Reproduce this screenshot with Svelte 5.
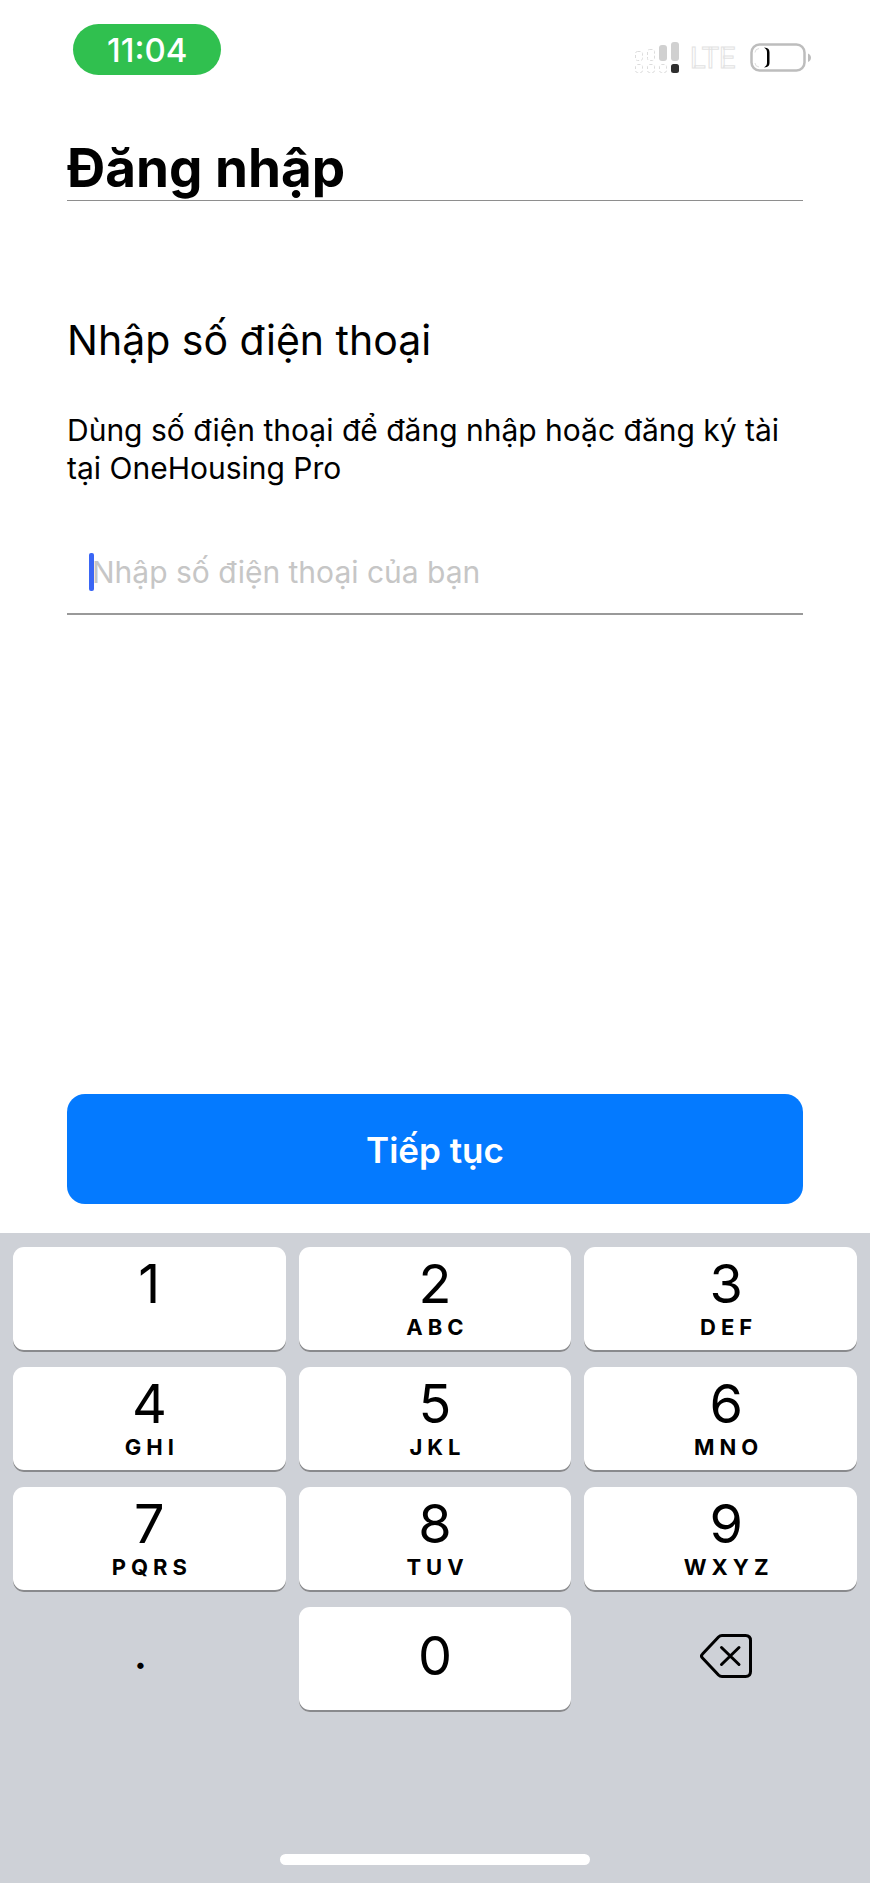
<script>
  const keys = [
    { digit: '1', letters: '' },
    { digit: '2', letters: 'ABC' },
    { digit: '3', letters: 'DEF' },
    { digit: '4', letters: 'GHI' },
    { digit: '5', letters: 'JKL' },
    { digit: '6', letters: 'MNO' },
    { digit: '7', letters: 'PQRS' },
    { digit: '8', letters: 'TUV' },
    { digit: '9', letters: 'WXYZ' }
  ];

  let phone = $state('');

  function press(value) {
    phone += value;
  }

  function erase() {
    phone = phone.slice(0, -1);
  }
</script>

<div class="screen">
  <header class="status">
    <time class="clock">11:04</time>
    <div class="indicators">
      <svg class="signal" viewBox="0 0 46 32" aria-hidden="true">
        <g fill="none" stroke="#dcdcdc" stroke-dasharray="3 2">
          <rect x="0.5" y="9.5" width="7" height="9" rx="2" />
          <rect x="12.5" y="7.5" width="7" height="11" rx="2" />
          <rect x="0.5" y="22.5" width="7" height="8" rx="2" />
          <rect x="12.5" y="22.5" width="7" height="8" rx="2" />
          <rect x="24.5" y="22.5" width="7" height="8" rx="2" />
        </g>
        <rect x="24" y="3" width="8" height="16" rx="3" fill="#d0d0d0" />
        <rect x="36" y="0" width="8" height="19" rx="3" fill="#d0d0d0" />
        <rect x="36" y="22" width="8" height="9" rx="2.5" fill="#2f2f2f" />
      </svg>
      <span class="network">LTE</span>
      <svg class="battery" viewBox="0 0 62 30" aria-hidden="true">
        <rect x="1.5" y="1.5" width="53" height="26" rx="8" fill="none" stroke="#bdbdbd" stroke-width="2.5" />
        <path d="M58 10.5c4 1.500 4 7 0 8.500z" fill="#bdbdbd" />
        <path d="M9 5.500q-4 .5-4 4M5 20q0 3.500 4 4" fill="none" stroke="#dedede" />
        <path d="M14 4.500c4.500.5 5.500 2 5.500 5v10c0 3-1 4.500-5.500 5 2.500-1.500 3-3 3-5v-10c0-2-.5-3.500-3-5z" fill="#000" />
      </svg>
    </div>
  </header>

  <main class="content">
    <h1>Đăng nhập</h1>
    <h2><label for="phone">Nhập số điện thoại</label></h2>
    <p>Dùng số điện thoại để đăng nhập hoặc đăng ký tài<br />tại OneHousing Pro</p>
    <div class="field">
      <span class="caret"></span>
      <input id="phone" type="tel" placeholder="Nhập số điện thoại của bạn" bind:value={phone} />
    </div>
    <button class="submit" type="button">Tiếp tục</button>
  </main>

  <section class="keyboard" aria-label="Bàn phím">
    <div class="keys">
      {#each keys as key}
        <button class="key" type="button" onclick={() => press(key.digit)}>
          <span class="digit">{key.digit}</span>
          <span class="letters">{key.letters}</span>
        </button>
      {/each}
      <button class="key plain dot" type="button" onclick={() => press('.')}>.</button>
      <button class="key zero" type="button" onclick={() => press('0')}>
        <span class="digit">0</span>
      </button>
      <button class="key plain" type="button" aria-label="Xóa" onclick={erase}>
        <svg class="backspace" viewBox="0 0 52 44" aria-hidden="true">
          <g fill="none" stroke="#000" stroke-width="3" stroke-linecap="round" stroke-linejoin="round">
            <path d="M22 1.500h23.500q5 0 5 5v31q0 5-5 5H22q-2 0-3.500-1.500L2.500 24q-2-2 0-4L18.500 3Q20 1.500 22 1.500z" />
            <path d="M21.500 13.500l17.500 17M39 13.500l-17.500 17" />
          </g>
        </svg>
      </button>
    </div>
    <div class="home"></div>
  </section>
</div>

<style>
  :global(body) {
    margin: 0;
    background: #fff;
  }

  .screen {
    display: flex;
    flex-direction: column;
    min-height: 100vh;
    color: #000;
    font-family: Inter, 'Noto Sans', sans-serif;
  }

  .status {
    display: flex;
    justify-content: space-between;
    align-items: flex-start;
    padding: 24px 58px 0 73px;
  }

  .clock {
    padding: 1px 34px 0;
    border-radius: 26px;
    background: #30c04f;
    color: #fff;
    font-size: 33px;
    font-weight: 500;
    line-height: 50px;
  }

  .indicators {
    display: flex;
    align-items: center;
    padding-top: 18px;
  }

  .signal {
    width: 46px;
    height: 32px;
  }

  .network {
    width: 48px;
    margin: 0 12px 0 9px;
    color: #fff;
    font-family: Roboto, sans-serif;
    font-size: 29px;
    line-height: 32px;
    -webkit-text-stroke: 1px #e2e2e2;
  }

  .battery {
    width: 62px;
    height: 30px;
  }

  .content {
    display: flex;
    flex: 1;
    flex-direction: column;
    padding: 63px 67px 29px;
  }

  h1 {
    margin: 0;
    padding-bottom: 2px;
    border-bottom: 1px solid #8e8e8e;
    font-size: 53px;
    font-weight: 700;
    line-height: 60px;
  }

  h2 {
    margin: 112px 0 0;
    font-size: 41px;
    font-weight: 400;
    line-height: 54px;
  }

  p {
    margin: 44px 0 0;
    font-size: 30px;
    line-height: 38px;
  }

  .field {
    display: flex;
    align-items: center;
    margin-top: 54px;
    padding: 12px 22px 22px;
    border-bottom: 2px solid #999;
  }

  .caret {
    width: 5px;
    height: 38px;
    border-radius: 2px;
    background: #3a66f5;
  }

  input {
    flex: 1;
    min-width: 0;
    margin-left: -2px;
    padding: 0;
    border: 0;
    outline: 0;
    background: none;
    color: #000;
    font: 400 30px/38px Inter, 'Noto Sans', sans-serif;
  }

  input::placeholder {
    color: #c6c6c6;
    opacity: 1;
  }

  .submit {
    height: 110px;
    margin-top: auto;
    padding: 2px 0 0;
    border: 0;
    border-radius: 18px;
    background: #047aff;
    color: #fff;
    font: 600 35px/40px Inter, 'Noto Sans', sans-serif;
  }

  .keyboard {
    padding: 14px 13px 18px;
    background: #ced1d7;
  }

  .keys {
    display: grid;
    grid-template-columns: repeat(3, 1fr);
    gap: 15px 13px;
  }

  .key {
    display: flex;
    flex-direction: column;
    align-items: center;
    height: 105px;
    padding: 8px 0 0;
    border: 0;
    border-radius: 11px;
    background: #fff;
    box-shadow: inset 0 -2px #898a8d;
    color: #000;
    font-family: Inter, 'Noto Sans', sans-serif;
  }

  .key:nth-child(3n) {
    padding-left: 11px;
  }

  .digit {
    font-size: 54px;
    line-height: 58px;
  }

  .letters {
    padding-left: 5px;
    font-size: 22px;
    font-weight: 700;
    letter-spacing: 5px;
    line-height: 28px;
  }

  .zero,
  .plain {
    justify-content: center;
    padding: 0 0 8px;
  }

  .plain {
    background: none;
    box-shadow: none;
  }

  .dot {
    padding: 0 18px 16px 0;
    font-size: 48px;
    line-height: 58px;
  }

  .backspace {
    width: 52px;
    height: 44px;
  }

  .home {
    width: 310px;
    height: 11px;
    margin: 142px auto 0;
    border-radius: 6px;
    background: #fff;
  }
</style>
